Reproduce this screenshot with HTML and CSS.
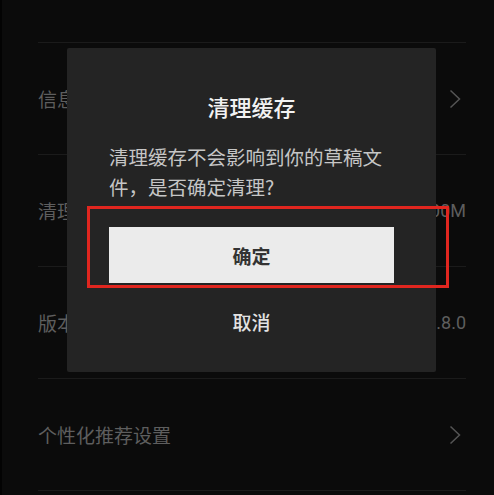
FILE: index.html
```html
<!DOCTYPE html>
<html lang="zh-CN">
<head>
<meta charset="utf-8">
<link rel="stylesheet" href="styles.css">
</head>
<body>
<div class="screen">
  <div class="list">
    <div class="spacer"></div>
    <div class="row"><span class="label">信息与通知</span><svg class="chev" width="12" height="20" viewBox="0 0 12 20"><polyline points="1.5,1.5 10.5,10 1.5,18.5" fill="none" stroke="#555" stroke-width="1.5"/></svg></div>
    <div class="row"><span class="label">清理缓存</span><span class="value">300M</span></div>
    <div class="row"><span class="label">版本信息</span><span class="value">7.8.0</span></div>
    <div class="row"><span class="label">个性化推荐设置</span><svg class="chev" width="12" height="20" viewBox="0 0 12 20"><polyline points="1.5,1.5 10.5,10 1.5,18.5" fill="none" stroke="#555" stroke-width="1.5"/></svg></div>
  </div>
  <div class="dialog">
    <div class="title">清理缓存</div>
    <div class="msg">清理缓存不会影响到你的草稿文件，是否确定清理?</div>
    <div class="confirm">确定</div>
    <div class="cancel">取消</div>
  </div>
  <div class="highlight"></div>
</div>
</body>
</html>
```
FILE: styles.css
```css
html, body {
  margin: 0;
  padding: 0;
  background: #0b0b0b;
}
body {
  font-family: "Noto Sans CJK SC", "Noto Sans", sans-serif;
}
.screen {
  position: relative;
  width: 494px;
  height: 495px;
  overflow: hidden;
  background: #0b0b0b;
  border-left: 2px solid #030303;
  box-sizing: border-box;
}
.list {
  display: flex;
  flex-direction: column;
  padding: 0 28px 0 36px;
}
.spacer {
  height: 42px;
  border-bottom: 1px solid #1b1b1b;
}
.row {
  height: 111px;
  border-bottom: 1px solid #1b1b1b;
  display: flex;
  align-items: center;
  justify-content: space-between;
}
.label {
  font-size: 19px;
  color: #5e5e5e;
}
.value {
  font-family: Roboto, "Noto Sans", sans-serif;
  font-size: 18px;
  color: #5e5e5e;
}
.chev {
  margin-right: 5px;
}
.dialog {
  position: absolute;
  left: 65px;
  top: 48px;
  width: 369px;
  height: 324px;
  background: #242424;
  border-radius: 2px;
  box-sizing: border-box;
  padding: 43px 42px 0 42px;
  display: flex;
  flex-direction: column;
}
.title {
  font-size: 22px;
  line-height: 30px;
  font-weight: 500;
  color: #f2f2f2;
  text-align: center;
}
.msg {
  margin-top: 21px;
  font-size: 19.5px;
  line-height: 30px;
  color: #c6c6c6;
}
.confirm {
  margin-top: 25px;
  height: 56px;
  background: #ebebeb;
  color: #333;
  font-size: 19px;
  font-weight: 700;
  display: flex;
  align-items: center;
  justify-content: center;
}
.cancel {
  margin-top: 24px;
  font-size: 19px;
  line-height: 30px;
  font-weight: 500;
  color: #e2e2e2;
  text-align: center;
}
.highlight {
  position: absolute;
  left: 85px;
  top: 206px;
  width: 362px;
  height: 82px;
  border: 3px solid #e0261f;
  box-sizing: border-box;
}
```
